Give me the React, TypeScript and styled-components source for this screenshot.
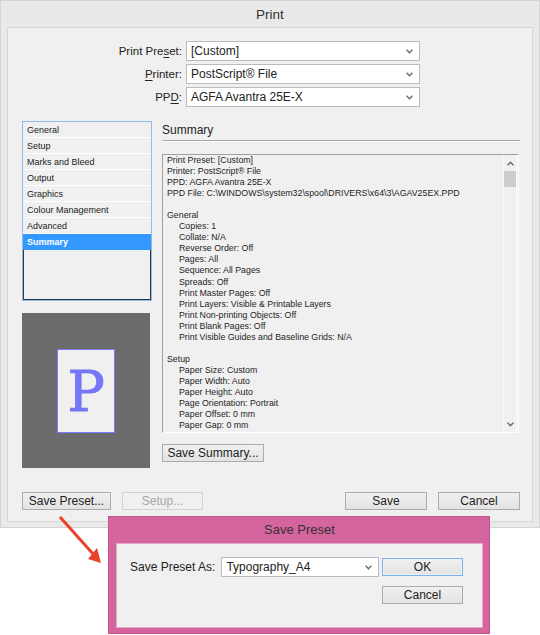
import React from 'react';
import styled, { createGlobalStyle } from 'styled-components';

const GlobalStyle = createGlobalStyle`
	html, body {
		margin: 0;
		padding: 0;
		background: #ffffff;
	}
	body {
		font-family: 'Liberation Sans', Arial, sans-serif;
		color: #222222;
	}
`;

const navItems = [
	'General',
	'Setup',
	'Marks and Bleed',
	'Output',
	'Graphics',
	'Colour Management',
	'Advanced',
	'Summary',
];

type SummarySection = {
	title?: string;
	lines: string[];
};

const summary: SummarySection[] = [
	{
		lines: [
			'Print Preset: [Custom]',
			'Printer: PostScript® File',
			'PPD: AGFA Avantra 25E-X',
			'PPD File: C:\\WINDOWS\\system32\\spool\\DRIVERS\\x64\\3\\AGAV25EX.PPD',
		],
	},
	{
		title: 'General',
		lines: [
			'Copies: 1',
			'Collate: N/A',
			'Reverse Order: Off',
			'Pages: All',
			'Sequence: All Pages',
			'Spreads: Off',
			'Print Master Pages: Off',
			'Print Layers: Visible & Printable Layers',
			'Print Non-printing Objects: Off',
			'Print Blank Pages: Off',
			'Print Visible Guides and Baseline Grids: N/A',
		],
	},
	{
		title: 'Setup',
		lines: [
			'Paper Size: Custom',
			'Paper Width: Auto',
			'Paper Height: Auto',
			'Page Orientation: Portrait',
			'Paper Offset: 0 mm',
			'Paper Gap: 0 mm',
		],
	},
];

const Chevron = ({ up = false }: { up?: boolean }) => (
	<svg width="7" height="5" viewBox="0 0 7 5">
		<path
			d={up ? 'M0.6 4.2 L3.5 1.2 L6.4 4.2' : 'M0.6 0.8 L3.5 3.8 L6.4 0.8'}
			fill="none"
			stroke="#6a6a6a"
			strokeWidth="1.4"
		/>
	</svg>
);

type DropdownProps = {
	value: string;
	width: number;
};

const Dropdown = ({ value, width }: DropdownProps) => (
	<Select $width={width}>
		<span>{value}</span>
		<Chevron />
	</Select>
);

export default function App() {
	return (
		<Page>
			<GlobalStyle />
			<Window>
				<TitleBar>Print</TitleBar>
				<Panel>
					<Form>
						<Label>
							Print Pre<u>s</u>et:
						</Label>
						<Dropdown value="[Custom]" width={234} />
						<Label>
							<u>P</u>rinter:
						</Label>
						<Dropdown value="PostScript® File" width={234} />
						<Label>
							PP<u>D</u>:
						</Label>
						<Dropdown value="AGFA Avantra 25E-X" width={234} />
					</Form>

					<Main>
						<LeftColumn>
							<NavList>
								{navItems.map((item) => (
									<NavItem key={item} $active={item === 'Summary'}>
										{item}
									</NavItem>
								))}
								<NavBlank />
							</NavList>
							<Preview>
								<Sheet>P</Sheet>
							</Preview>
						</LeftColumn>

						<RightColumn>
							<SectionTitle>Summary</SectionTitle>
							<SummaryBox>
								<SummaryText>
									{summary.map((section, i) => (
										<SummaryBlock key={i}>
											{section.title && <SummaryLine>{section.title}</SummaryLine>}
											{section.lines.map((line) => (
												<SummaryLine key={line} $indent={!!section.title}>
													{line}
												</SummaryLine>
											))}
										</SummaryBlock>
									))}
								</SummaryText>
								<ScrollBar>
									<ScrollArrow>
										<Chevron up />
									</ScrollArrow>
									<ScrollThumb />
									<ScrollTrack />
									<ScrollArrow>
										<Chevron />
									</ScrollArrow>
								</ScrollBar>
							</SummaryBox>
							<Button $width={102}>Save Summary...</Button>
						</RightColumn>
					</Main>

					<Footer>
						<ButtonGroup>
							<Button $width={89}>Save Preset...</Button>
							<Button $width={81} disabled>
								Setup...
							</Button>
						</ButtonGroup>
						<ButtonGroup>
							<Button $width={82}>Save</Button>
							<Button $width={82}>Cancel</Button>
						</ButtonGroup>
					</Footer>
				</Panel>
			</Window>

			<Arrow width="50" height="56" viewBox="55 512 50 56">
				<line x1="60" y1="517" x2="94" y2="555" stroke="#e8412c" strokeWidth="3" />
				<polygon points="101,563 88,559 97,548" fill="#e8412c" />
			</Arrow>

			<Dialog>
				<DialogTitle>Save Preset</DialogTitle>
				<DialogPanel>
					<DialogField>
						<DialogLabel>Save Preset As:</DialogLabel>
						<Dropdown value="Typography_A4" width={158} />
					</DialogField>
					<DialogButtons>
						<Button $width={81} $primary>
							OK
						</Button>
						<Button $width={81}>Cancel</Button>
					</DialogButtons>
				</DialogPanel>
			</Dialog>
		</Page>
	);
}

const Page = styled.div`
	position: relative;
	width: 540px;
	height: 635px;
	overflow: hidden;
`;

const Window = styled.div`
	box-sizing: border-box;
	width: 540px;
	height: 528px;
	display: flex;
	flex-direction: column;
	padding: 0 6px 5px 6px;
	background: #e9e9e9;
	border: 1px solid #d4d4d4;
`;

const TitleBar = styled.div`
	height: 26px;
	line-height: 27px;
	text-align: center;
	font-size: 13.5px;
	color: #333333;
`;

const Panel = styled.div`
	flex: 1;
	display: flex;
	flex-direction: column;
	padding: 13px 12px 11px 14px;
	background: #f0f0f0;
	border: 1px solid #d7d7d7;
`;

const Form = styled.div`
	display: grid;
	grid-template-columns: 160px 234px;
	column-gap: 4px;
	row-gap: 3px;
	margin-bottom: 14px;
`;

const Label = styled.div`
	text-align: right;
	font-size: 11.5px;
	line-height: 20px;
	color: #222222;

	u {
		text-decoration-thickness: 1px;
		text-underline-offset: 2px;
	}
`;

const Select = styled.div<{ $width: number }>`
	box-sizing: border-box;
	width: ${(p) => p.$width}px;
	height: 20px;
	display: flex;
	align-items: center;
	justify-content: space-between;
	padding: 0 6px 0 4px;
	background: #ffffff;
	border: 1px solid #b9bbc0;
	font-size: 12px;
	color: #222222;
`;

const Main = styled.div`
	display: flex;
	gap: 10px;
`;

const LeftColumn = styled.div`
	width: 130px;
	display: flex;
	flex-direction: column;
	gap: 12px;
`;

const NavList = styled.div`
	box-sizing: border-box;
	height: 180px;
	display: flex;
	flex-direction: column;
	border: 1px solid #8fbbe8;
	background: #f0f0f0;
`;

const NavItem = styled.div<{ $active?: boolean }>`
	height: 15px;
	line-height: 16px;
	padding-left: 4px;
	font-size: 9px;
	border-bottom: 1px solid ${(p) => (p.$active ? '#3399ff' : '#ffffff')};
	background: ${(p) => (p.$active ? '#3399ff' : 'transparent')};
	color: ${(p) => (p.$active ? '#ffffff' : '#222222')};
	font-weight: ${(p) => (p.$active ? 'bold' : 'normal')};
`;

const NavBlank = styled.div`
	flex: 1;
	border: 1px solid #2f3542;
	border-top: none;
`;

const Preview = styled.div`
	width: 128px;
	height: 155px;
	display: flex;
	align-items: center;
	justify-content: center;
	background: #6b6b6b;
`;

const Sheet = styled.div`
	box-sizing: border-box;
	width: 58px;
	height: 84px;
	display: flex;
	align-items: center;
	justify-content: center;
	background: #f0f0f0;
	border: 1px solid #7b7bff;
	font-family: 'DejaVu Serif', 'Liberation Serif', serif;
	font-size: 56px;
	color: #7676f6;
	-webkit-text-stroke: 0.8px #7676f6;
	padding-top: 2px;
`;

const RightColumn = styled.div`
	flex: 1;
	display: flex;
	flex-direction: column;
	align-items: flex-start;
`;

const SectionTitle = styled.div`
	align-self: stretch;
	height: 19px;
	line-height: 19px;
	font-size: 12px;
	color: #222222;
	border-bottom: 1px solid #a9a9a9;
	box-shadow: 0 1px 0 #ffffff;
	margin-bottom: 13px;
`;

const SummaryBox = styled.div`
	box-sizing: border-box;
	width: 357px;
	height: 279px;
	display: flex;
	border: 1px solid;
	border-color: #a0a0a0 #ffffff #ffffff #a0a0a0;
	margin-bottom: 11px;
`;

const SummaryText = styled.div`
	flex: 1;
	overflow: hidden;
	padding: 0 0 0 4px;
	font-size: 8.8px;
	line-height: 11.05px;
	color: #1e1e1e;
`;

const SummaryBlock = styled.div`
	margin-bottom: 11.05px;
`;

const SummaryLine = styled.div<{ $indent?: boolean }>`
	white-space: nowrap;
	padding-left: ${(p) => (p.$indent ? '12px' : '0')};
`;

const ScrollBar = styled.div`
	width: 12px;
	display: flex;
	flex-direction: column;
	align-items: center;
	margin-right: 1px;
	background: #f0f0f0;
	border-left: 1px solid #fbfbfb;
	border-right: 1px solid #fbfbfb;
`;

const ScrollArrow = styled.div`
	height: 16px;
	display: flex;
	align-items: center;
	justify-content: center;
`;

const ScrollThumb = styled.div`
	width: 12px;
	height: 16px;
	background: #cdcdcd;
`;

const ScrollTrack = styled.div`
	flex: 1;
`;

const Button = styled.button<{ $width: number; $primary?: boolean }>`
	box-sizing: border-box;
	width: ${(p) => p.$width}px;
	height: 18px;
	padding: 0;
	font-family: 'Liberation Sans', Arial, sans-serif;
	font-size: 12px;
	color: #222222;
	background: linear-gradient(#f0f0f0, #e3e3e3);
	border: 1px solid ${(p) => (p.$primary ? '#7eb4ea' : '#acacac')};
	box-shadow: ${(p) => (p.$primary ? 'inset 0 0 0 1px #e5f1fb' : 'none')};

	&:disabled {
		color: #a6a6a6;
		background: #f0f0f0;
		border-color: #d2d2d2;
	}
`;

const Footer = styled.div`
	margin-top: auto;
	display: flex;
	justify-content: space-between;
`;

const ButtonGroup = styled.div`
	display: flex;
	gap: 11px;
`;

const Arrow = styled.svg`
	position: absolute;
	left: 55px;
	top: 512px;
`;

const Dialog = styled.div`
	position: absolute;
	left: 108px;
	top: 516px;
	box-sizing: border-box;
	width: 382px;
	height: 118px;
	display: flex;
	flex-direction: column;
	padding: 0 6px 5px 7px;
	background: #d5659e;
	border: 1px solid #c4558f;
`;

const DialogTitle = styled.div`
	height: 26px;
	line-height: 26px;
	text-align: center;
	font-size: 13px;
	color: #333333;
`;

const DialogPanel = styled.div`
	flex: 1;
	display: flex;
	justify-content: space-between;
	padding: 13px 19px 0 13px;
	background: #f0f0f0;
	border: 1px solid #e2a9c6;
`;

const DialogField = styled.div`
	display: flex;
	align-items: center;
	align-self: flex-start;
	gap: 6px;
`;

const DialogLabel = styled.div`
	font-size: 12px;
	color: #222222;
`;

const DialogButtons = styled.div`
	display: flex;
	flex-direction: column;
	gap: 10px;
	padding-top: 1px;
`;
